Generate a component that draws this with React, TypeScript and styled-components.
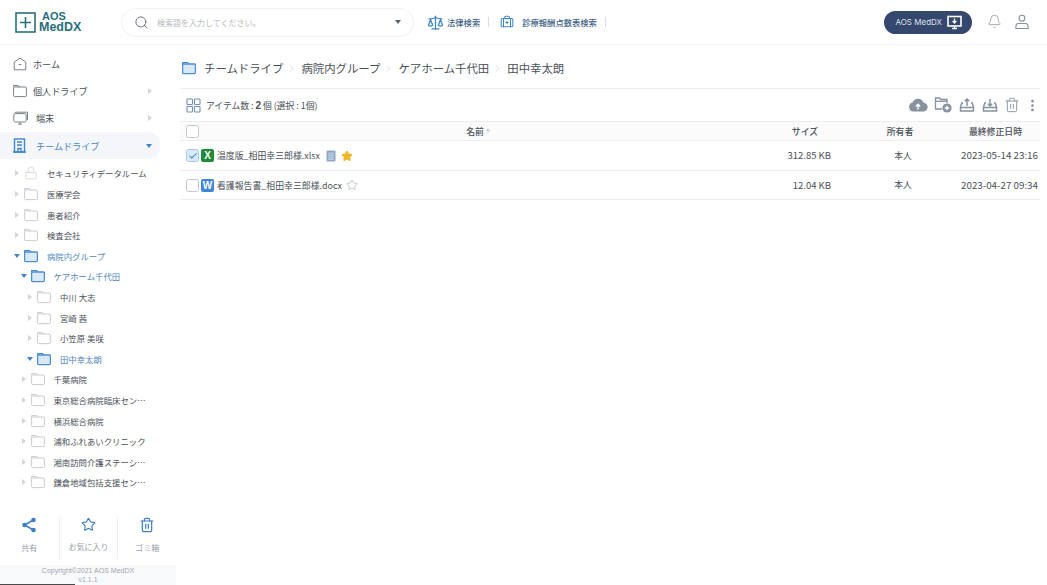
import { ReactNode } from 'react'
import styled, { createGlobalStyle } from 'styled-components'
import {
  Search,
  Scale,
  BriefcaseMedical,
  Bell,
  Lock,
  Star,
  Trash2,
  EllipsisVertical,
  Check,
  ChevronRight,
  ArrowUp,
} from 'lucide-react'

const GlobalStyle = createGlobalStyle`
  html, body {
    margin: 0;
    padding: 0;
    background: #fff;
    font-family: "Noto Sans CJK JP", "Noto Sans", sans-serif;
    color: #4a4f57;
  }
  * { box-sizing: border-box; }
`

const Page = styled.div`
  width: 1047px;
  height: 585px;
  overflow: hidden;
  display: flex;
  flex-direction: column;
`

const Header = styled.header`
  height: 45px;
  flex: none;
  display: flex;
  align-items: center;
  padding: 0 17px 0 15px;
  border-bottom: 1px solid #f4f5f7;
`

const Logo = styled.div`
  width: 106px;
  display: flex;
  align-items: center;
  gap: 3px;
  color: #28707c;
`

const LogoText = styled.div`
  font-family: 'Liberation Sans', sans-serif;
  font-weight: 700;
  font-size: 12.5px;
  line-height: 11px;
  span {
    display: block;
    font-size: 11px;
    margin-left: 3px;
  }
`

const SearchBox = styled.div`
  width: 293px;
  height: 29px;
  border: 1px solid #f0f1f4;
  border-radius: 15px;
  display: flex;
  align-items: center;
  padding: 0 12px 0 12px;
  gap: 8px;
  font-size: 8px;
  color: #b5b9c0;
  svg { color: #666c75; flex: none; }
`

const Placeholder = styled.div`
  flex: 1;
`

const DownCaret = styled.div`
  width: 0;
  height: 0;
  border-left: 3.5px solid transparent;
  border-right: 3.5px solid transparent;
  border-top: 4.5px solid #5c626b;
`

const HeaderLink = styled.div<{ $gap: number; $left: number }>`
  display: flex;
  align-items: center;
  gap: ${p => p.$gap}px;
  margin-left: ${p => p.$left}px;
  font-size: 8.3px;
  font-weight: 500;
  color: #3f5f86;
  svg { color: #3f86c8; }
`

const LinkSep = styled.div<{ $left: number }>`
  width: 1px;
  height: 10px;
  margin-left: ${p => p.$left}px;
  background: #d9dce1;
`

const Spacer = styled.div`
  flex: 1;
`

const AppButton = styled.div`
  width: 88px;
  height: 23px;
  border-radius: 12px;
  background: #34476c;
  color: #dfe4ee;
  font-family: Inter, sans-serif;
  font-size: 8px;
  display: flex;
  align-items: center;
  justify-content: flex-end;
  gap: 5px;
  padding-right: 10px;
`

const HeaderIcons = styled.div`
  margin-left: 15px;
  display: flex;
  gap: 12px;
  color: #8b919b;
`

const Body = styled.div`
  flex: 1;
  display: flex;
  min-height: 0;
`

const Sidebar = styled.aside`
  width: 176px;
  flex: none;
  display: flex;
  flex-direction: column;
  padding-top: 5px;
`

const NavItem = styled.div<{ $active?: boolean; $gap: number }>`
  height: 27.3px;
  margin-right: 16px;
  padding: 0 8px 0 13px;
  display: flex;
  align-items: center;
  gap: ${p => p.$gap}px;
  font-size: 9.1px;
  border-radius: 0 12px 12px 0;
  color: ${p => (p.$active ? '#3f86c8' : '#4a4f57')};
  background: ${p => (p.$active ? '#f4f6f9' : 'transparent')};
  svg { color: ${p => (p.$active ? '#3f86c8' : '#7b818b')}; flex: none; }
`

const NavLabel = styled.span`
  flex: 1;
`

const RightCaret = styled.div`
  width: 0;
  height: 0;
  flex: none;
  border-top: 3.5px solid transparent;
  border-bottom: 3.5px solid transparent;
  border-left: 4px solid #d3d6da;
`

const ActiveCaret = styled.div`
  width: 0;
  height: 0;
  flex: none;
  border-left: 3.5px solid transparent;
  border-right: 3.5px solid transparent;
  border-top: 4px solid #3f86c8;
`

const Tree = styled.div`
  margin-top: 4px;
  display: flex;
  flex-direction: column;
`

const TreeRow = styled.div<{ $level: number; $open?: boolean }>`
  height: 20.6px;
  padding-left: ${p => 12 + p.$level * 6.5}px;
  display: flex;
  align-items: center;
  font-size: 8.4px;
  white-space: nowrap;
  color: ${p => (p.$open ? '#4f86c0' : '#4a4f57')};
`

const TreeCaretSlot = styled.div`
  width: 10px;
  display: flex;
  justify-content: center;
  flex: none;
`

const TreeIcon = styled.div<{ $open?: boolean }>`
  width: 14px;
  margin: 0 9px 0 2px;
  flex: none;
  display: flex;
  color: ${p => (p.$open ? '#4a8fd6' : '#c9ccd1')};
`

const SideActions = styled.div`
  margin-top: auto;
  display: flex;
  height: 60px;
  padding: 12px 0 6px;
`

const SideAction = styled.div<{ $divider?: boolean }>`
  width: 59px;
  display: flex;
  flex-direction: column;
  align-items: center;
  gap: 9px;
  font-size: 8px;
  color: #9a9fa7;
  border-left: ${p => (p.$divider ? '1px solid #eef0f2' : 'none')};
  svg { color: #3f7fc4; flex: none; }
`

const SideFooter = styled.div`
  height: 20px;
  background: #f7f9fb;
  text-align: center;
  font-family: 'Liberation Sans', sans-serif;
  font-size: 7px;
  line-height: 9px;
  padding-top: 1px;
  color: #a3a8b0;
  display: flex;
  flex-direction: column;
`

const FooterEdge = styled.div`
  margin-top: auto;
  height: 1px;
  width: 75px;
  background: #4a4a4a;
`

const Main = styled.main`
  flex: 1;
  padding: 0 7px 0 4px;
  min-width: 0;
`

const Breadcrumb = styled.div`
  height: 44px;
  display: flex;
  align-items: center;
  padding: 3px 0 0 2px;
  font-size: 11.4px;
  color: #4a4f57;
  border-bottom: 1px solid #eceef1;
`

const Crumb = styled.div`
  display: flex;
  align-items: center;
  svg { color: #c4c8ce; margin: 0 4px 0 3px; }
`

const FolderHead = styled.div`
  display: flex;
  margin-right: 8px;
  color: #4a8fd6;
`

const Toolbar = styled.div`
  height: 33px;
  display: flex;
  align-items: center;
  padding: 0 0 0 6px;
  font-size: 8.8px;
  border-bottom: 1px solid #eceef1;
  svg { flex: none; }
`

const CountText = styled.span`
  margin-left: 5px;
  flex: 1;
  b { font-family: 'Liberation Sans', sans-serif; font-size: 10px; }
`

const ToolIcons = styled.div`
  display: flex;
  align-items: center;
  gap: 5px;
  color: #87919f;
`

const Row = styled.div<{ $head?: boolean }>`
  height: ${p => (p.$head ? 19 : 29.5)}px;
  display: grid;
  grid-template-columns: 1fr 78px 100px 85px;
  align-items: center;
  padding: 0 2px 0 6px;
  font-size: 8.9px;
  font-weight: ${p => (p.$head ? 500 : 400)};
  background: ${p => (p.$head ? '#fbfbfc' : '#fff')};
  border-bottom: 1px solid #eceef1;
`

const NameHeader = styled.div`
  position: relative;
  padding-right: 4px;
  display: flex;
  justify-content: center;
  align-items: center;
  gap: 1px;
  svg { color: #9a9fa7; }
`

const HeaderCheck = styled.div`
  position: absolute;
  left: 0;
  top: 0;
`

const Check13 = styled.div<{ $on?: boolean }>`
  width: 13px;
  height: 13px;
  flex: none;
  border-radius: 2.5px;
  border: 1px solid ${p => (p.$on ? '#a9c9ea' : '#c6c9ce')};
  background: ${p => (p.$on ? '#d9e9f9' : '#fff')};
  color: #3f86c8;
  display: flex;
  align-items: center;
  justify-content: center;
`

const NameCell = styled.div`
  display: flex;
  align-items: center;
  gap: 2px;
  padding-top: 1px;
`

const FileBadge = styled.div<{ $color: string }>`
  width: 13px;
  height: 13px;
  margin-right: 1px;
  border-radius: 2px;
  background: ${p => p.$color};
  color: #fff;
  font-family: 'Liberation Sans', sans-serif;
  font-weight: 700;
  font-size: 10px;
  display: flex;
  align-items: center;
  justify-content: center;
`

const NameText = styled.span`
  margin-right: 2px;
`

const NoteIcon = styled.div`
  display: flex;
  margin: 0 3px 0 2px;
`

const Cell = styled.div<{ $align: string; $pad?: number; $size?: number }>`
  text-align: ${p => p.$align};
  padding-right: ${p => p.$pad ?? 0}px;
  font-size: ${p => p.$size ?? 8.9}px;
  white-space: nowrap;
`

const FolderGlyph = ({ size = 14, open }: { size?: number; open?: boolean }) => (
  <svg width={size} height={size} viewBox="0 0 14 14" fill={open ? '#dbe9f7' : 'none'} stroke="currentColor" strokeWidth={open ? 1.3 : 1}>
    <path d="M.6 3V1.6h5L7 3" fill="none" />
    <rect x=".6" y="3" width="12.8" height="9.6" rx="1" />
  </svg>
)

const HomeIcon = () => (
  <svg width="14" height="14" viewBox="0 0 14 14" fill="none" stroke="currentColor" strokeWidth="1">
    <path d="M7 1.2 12.8 5v7.8H1.2V5z" strokeLinejoin="round" />
    <path d="M5.6 7.5h2.8" />
  </svg>
)

const MonitorIcon = () => (
  <svg width="16" height="15" viewBox="0 0 16 15" fill="none" stroke="currentColor" strokeWidth="1">
    <path d="M2.5 2V1.2h12V9" />
    <rect x=".8" y="2.6" width="12.4" height="8.4" rx="1.5" />
    <path d="M5 13.2h4M7 11v2" />
  </svg>
)

const BuildingIcon = () => (
  <svg width="13" height="15" viewBox="0 0 13 15" fill="none" stroke="currentColor" strokeWidth="1.4">
    <rect x="1.5" y="1" width="10" height="13" />
    <path d="M4 4h5M4 7h5M5 14v-3.5h3V14M0 14h13" />
  </svg>
)

const UserIcon = () => (
  <svg width="16" height="16" viewBox="0 0 16 16" fill="none" stroke="currentColor" strokeWidth="1.1">
    <circle cx="8" cy="4.2" r="2.9" />
    <path d="M4.5 9.5h7c1.6 0 2.6 1.3 2.6 3v2H1.9v-2c0-1.7 1-3 2.6-3z" />
  </svg>
)

const DesktopDownloadIcon = () => (
  <svg width="15" height="15" viewBox="0 0 15 15" fill="none">
    <rect x="1" y="1.5" width="13" height="9.5" stroke="#fff" strokeWidth="1.6" />
    <path d="M7.5 3.5v4M5.6 6 7.5 8l1.9-2M5 13.5h5M7.5 11v2.5" stroke="#fff" strokeWidth="1.3" />
  </svg>
)

const GridIcon = () => (
  <svg width="15" height="15" viewBox="0 0 15 15" fill="none" stroke="#6f8fb8" strokeWidth="1.1">
    <rect x="1" y="1" width="5.5" height="5.5" rx=".8" />
    <rect x="8.5" y="1" width="5.5" height="5.5" rx=".8" />
    <rect x="1" y="8.5" width="5.5" height="5.5" rx=".8" />
    <rect x="8.5" y="8.5" width="5.5" height="5.5" rx=".8" />
  </svg>
)

const ShareIcon = () => (
  <svg width="16" height="16" viewBox="0 0 16 16" fill="currentColor" stroke="currentColor" strokeWidth="1.6">
    <path d="M12.5 3 3.5 8l9 5" fill="none" />
    <circle cx="12.5" cy="3" r="1.5" />
    <circle cx="3.5" cy="8" r="1.5" />
    <circle cx="12.5" cy="13" r="1.5" />
  </svg>
)

const DriveIcon = ({ up }: { up: boolean }) => (
  <svg width="18" height="18" viewBox="0 0 18 18" fill="none" stroke="currentColor" strokeWidth="1.5">
    <path d="M5 7H3.8L2.5 11v4h13v-4l-1.3-4H13" />
    <path d="M2.5 11.5h13" />
    <path d={up ? 'M9 10V3M6.8 5.2 9 3l2.2 2.2' : 'M9 3v7M6.8 7.8 9 10l2.2-2.2'} />
  </svg>
)

const CloudIcon = () => (
  <svg width="20" height="18" viewBox="0 0 20 18">
    <path fill="currentColor" d="M5.5 15.5a4.5 4.5 0 0 1-.8-8.9A5.6 5.6 0 0 1 15.3 6.5a4.5 4.5 0 0 1-.3 9z" />
    <path stroke="#fff" strokeWidth="1.4" fill="none" d="M10 13.5V8.5M7.8 10.5l2.2-2.2 2.2 2.2" />
  </svg>
)

const AddFolderIcon = () => (
  <svg width="20" height="18" viewBox="0 0 20 18" fill="none" stroke="currentColor" strokeWidth="1.3">
    <path d="M9 13H2.5V2h4l1.2 1.5H14V7" />
    <path d="M2.5 5.3H14" />
    <circle cx="14" cy="12" r="4.6" fill="currentColor" stroke="none" />
    <path stroke="#fff" d="M14 9.7v4.6M11.7 12h4.6" />
  </svg>
)

const NoteGlyph = () => (
  <svg width="10" height="12" viewBox="0 0 10 12">
    <rect width="9" height="11" x=".5" y=".5" rx="1" fill="#8fa6c6" />
    <path d="M2.2 3.2h5.6M2.2 5.2h5.6M2.2 7.2h5.6M2.2 9.2h5.6" stroke="#e6edf6" strokeWidth=".8" />
  </svg>
)

const TreeItem = ({ level, label, open, lock }: { level: number; label: string; open?: boolean; lock?: boolean }) => (
  <TreeRow $level={level} $open={open}>
    <TreeCaretSlot>{open ? <ActiveCaret /> : <RightCaret />}</TreeCaretSlot>
    <TreeIcon $open={open}>{lock ? <Lock size={14} strokeWidth={1.1} /> : <FolderGlyph open={open} />}</TreeIcon>
    {label}
  </TreeRow>
)

const treeItems = [
  { level: 0, label: 'セキュリティデータルーム', lock: true },
  { level: 0, label: '医療学会' },
  { level: 0, label: '患者紹介' },
  { level: 0, label: '検査会社' },
  { level: 0, label: '病院内グループ', open: true },
  { level: 1, label: 'ケアホーム千代田', open: true },
  { level: 2, label: '中川 大志' },
  { level: 2, label: '宮崎 茜' },
  { level: 2, label: '小笠原 美咲' },
  { level: 2, label: '田中幸太朗', open: true },
  { level: 1, label: '千葉病院' },
  { level: 1, label: '東京総合病院臨床セン…' },
  { level: 1, label: '横浜総合病院' },
  { level: 1, label: '浦和ふれあいクリニック' },
  { level: 1, label: '湘南訪問介護ステーシ…' },
  { level: 1, label: '鎌倉地域包括支援セン…' },
]

const crumbs = ['チームドライブ', '病院内グループ', 'ケアホーム千代田', '田中幸太朗']

const FileRow = ({ badge, color, name, checked, tail, size, date }: {
  badge: string
  color: string
  name: string
  checked?: boolean
  tail: ReactNode
  size: string
  date: string
}) => (
  <Row>
    <NameCell>
      <Check13 $on={checked}>{checked && <Check size={10} strokeWidth={2.5} />}</Check13>
      <FileBadge $color={color}>{badge}</FileBadge>
      <NameText>{name}</NameText>
      {tail}
    </NameCell>
    <Cell $align="right" $pad={22} $size={9.5}>{size}</Cell>
    <Cell $align="center">本人</Cell>
    <Cell $align="right" $size={9.8}>{date}</Cell>
  </Row>
)

const App = () => {
  return (
    <Page>
      <GlobalStyle />
      <Header>
        <Logo>
          <svg width="21" height="21" viewBox="0 0 21 21" fill="none" stroke="currentColor" strokeWidth="1.6">
            <rect x="1" y="1" width="19" height="19" />
            <path d="M10.5 5v11M5 10.5h11" />
          </svg>
          <LogoText>
            <span>AOS</span>
            MedDX
          </LogoText>
        </Logo>
        <SearchBox>
          <Search size={15} strokeWidth={1.5} />
          <Placeholder>検索語を入力してください。</Placeholder>
          <DownCaret />
        </SearchBox>
        <HeaderLink $gap={3} $left={13}>
          <Scale size={17} strokeWidth={1.8} />
          法律検索
        </HeaderLink>
        <LinkSep $left={8} />
        <HeaderLink $gap={8} $left={11}>
          <BriefcaseMedical size={14} strokeWidth={1.8} />
          診療報酬点数表検索
        </HeaderLink>
        <LinkSep $left={8} />
        <Spacer />
        <AppButton>
          AOS MedDX
          <DesktopDownloadIcon />
        </AppButton>
        <HeaderIcons>
          <Bell size={15} strokeWidth={1.2} />
          <UserIcon />
        </HeaderIcons>
      </Header>
      <Body>
        <Sidebar>
          <NavItem $gap={6}>
            <HomeIcon />
            <NavLabel>ホーム</NavLabel>
          </NavItem>
          <NavItem $gap={6}>
            <FolderGlyph />
            <NavLabel>個人ドライブ</NavLabel>
            <RightCaret />
          </NavItem>
          <NavItem $gap={7}>
            <MonitorIcon />
            <NavLabel>端末</NavLabel>
            <RightCaret />
          </NavItem>
          <NavItem $gap={10} $active>
            <BuildingIcon />
            <NavLabel>チームドライブ</NavLabel>
            <ActiveCaret />
          </NavItem>
          <Tree>
            {treeItems.map(item => (
              <TreeItem key={item.label} {...item} />
            ))}
          </Tree>
          <SideActions>
            <SideAction>
              <ShareIcon />
              共有
            </SideAction>
            <SideAction $divider>
              <Star size={15} strokeWidth={1.8} />
              お気に入り
            </SideAction>
            <SideAction $divider>
              <Trash2 size={16} strokeWidth={1.8} />
              ゴミ箱
            </SideAction>
          </SideActions>
          <SideFooter>
            Copyright©2021 AOS MedDX
            <br />
            v1.1.1
            <FooterEdge />
          </SideFooter>
        </Sidebar>
        <Main>
          <Breadcrumb>
            <FolderHead>
              <FolderGlyph open />
            </FolderHead>
            {crumbs.map((c, i) => (
              <Crumb key={c}>
                {c}
                {i < crumbs.length - 1 && <ChevronRight size={11} strokeWidth={1.3} />}
              </Crumb>
            ))}
          </Breadcrumb>
          <Toolbar>
            <GridIcon />
            <CountText>
              アイテム数 : <b>2</b> 個 (選択 : 1個)
            </CountText>
            <ToolIcons>
              <CloudIcon />
              <AddFolderIcon />
              <DriveIcon up />
              <DriveIcon up={false} />
              <Trash2 size={16} strokeWidth={1.4} />
              <EllipsisVertical size={15} strokeWidth={2.4} />
            </ToolIcons>
          </Toolbar>
          <Row $head>
            <NameHeader>
              <HeaderCheck>
                <Check13 />
              </HeaderCheck>
              名前
              <ArrowUp size={6} strokeWidth={2} />
            </NameHeader>
            <Cell $align="center" $pad={18}>サイズ</Cell>
            <Cell $align="center" $pad={6}>所有者</Cell>
            <Cell $align="center">最終修正日時</Cell>
          </Row>
          <FileRow
            checked
            badge="X"
            color="#1f8a3a"
            name="温度版_相田幸三郎様.xlsx"
            size="312.85 KB"
            date="2023-05-14 23:16"
            tail={
              <>
                <NoteIcon>
                  <NoteGlyph />
                </NoteIcon>
                <Star size={12} fill="#f0b429" color="#f0b429" />
              </>
            }
          />
          <FileRow
            badge="W"
            color="#3f86d8"
            name="看護報告書_相田幸三郎様.docx"
            size="12.04 KB"
            date="2023-04-27 09:34"
            tail={<Star size={12} strokeWidth={1} color="#8e949e" />}
          />
        </Main>
      </Body>
    </Page>
  )
}

export default App
